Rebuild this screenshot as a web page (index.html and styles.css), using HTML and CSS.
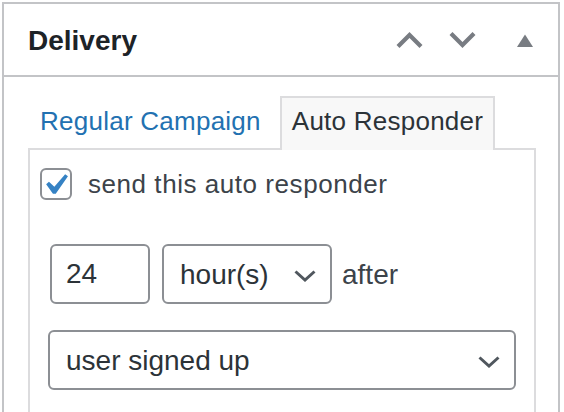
FILE: index.html
```html
<!DOCTYPE html>
<html lang="en">
<head>
<meta charset="utf-8">
<title>Delivery</title>
<link rel="stylesheet" href="styles.css">
</head>
<body>
<div class="postbox">
  <div class="postbox-header">
    <h2 class="hndle">Delivery</h2>
    <div class="handle-actions">
      <svg class="handle-icon chevron" viewBox="0 0 27 16" width="27" height="16" aria-hidden="true"><polyline points="2,14.5 13.5,3 25,14.5"/></svg>
      <svg class="handle-icon chevron chevron-down" viewBox="0 0 27 16" width="27" height="16" aria-hidden="true"><polyline points="2,1.5 13.5,13 25,1.5"/></svg>
      <svg class="handle-icon toggle" viewBox="0 0 16 13" width="16" height="13" aria-hidden="true"><polygon points="0,13 8,0.5 16,13"/></svg>
    </div>
  </div>
  <div class="inside">
    <ul class="tabs">
      <li class="tab"><a class="tab-link" href="#">Regular Campaign</a></li>
      <li class="tab tab-active">Auto Responder</li>
    </ul>
    <div class="tab-panel">
      <label class="check-row">
        <span class="checkbox"><svg class="checkmark" viewBox="0 0 20 20" width="42" height="42" aria-hidden="true"><path d="M14.83 4.89l1.34.94-5.81 8.38H9.02L5.78 9.67l1.34-1.25 2.57 2.4z"/></svg></span>
        <span class="check-label">send this auto responder</span>
      </label>
      <div class="settings">
        <div class="row">
          <input class="field num" type="text" value="24">
          <span class="select-wrap">
            <select class="field select select-unit"><option>hour(s)</option></select>
            <svg class="chev" viewBox="0 0 22 12" width="22" height="12" aria-hidden="true"><polyline points="1.5,1.5 11,10 20.5,1.5"/></svg>
          </span>
          <span class="after">after</span>
        </div>
        <div class="row row-event">
          <span class="select-wrap select-wrap-full">
            <select class="field select select-full"><option>user signed up</option></select>
            <svg class="chev" viewBox="0 0 22 12" width="22" height="12" aria-hidden="true"><polyline points="1.5,1.5 11,10 20.5,1.5"/></svg>
          </span>
        </div>
      </div>
    </div>
  </div>
</div>
</body>
</html>
```
FILE: styles.css
```css
html, body {
  height: 100%;
}
body {
  margin: 0;
  background: #ffffff;
  overflow: hidden;
  font-family: "Liberation Sans", Arial, sans-serif;
  color: #3c434a;
}
.postbox {
  box-sizing: border-box;
  display: flex;
  flex-direction: column;
  width: 558px;
  height: 410px;
  margin: 2px 0 0 2px;
  border: 2px solid #c3c4c7;
  border-bottom: 0;
  background: #ffffff;
  overflow: hidden;
}
.postbox-header {
  display: flex;
  align-items: center;
  justify-content: space-between;
  border-bottom: 2px solid #c3c4c7;
}
.hndle {
  margin: 0;
  padding: 17px 24px 15px;
  font-size: 28px;
  line-height: 39px;
  font-weight: 700;
  color: #1d2327;
}
.handle-actions {
  display: flex;
  align-items: center;
  padding-right: 25px;
}
.handle-icon {
  display: block;
}
.chevron polyline {
  fill: none;
  stroke: #787c82;
  stroke-width: 4.2;
  stroke-linecap: butt;
  stroke-linejoin: miter;
}
.chevron-down {
  margin-left: 26px;
}
.toggle {
  margin-left: 41px;
  margin-top: 1px;
}
.toggle polygon {
  fill: #787c82;
}
.inside {
  flex: 1;
  display: flex;
  flex-direction: column;
  padding: 19px 22px 0 24px;
}
.tabs {
  list-style: none;
  margin: 0;
  padding: 0;
  display: flex;
  gap: 7px;
}
.tab {
  position: relative;
  z-index: 1;
  margin-bottom: -2px;
  padding: 6px 10px 11px;
  border: 2px solid transparent;
  border-bottom: 0;
  font-size: 26px;
  line-height: 35px;
  letter-spacing: 0.25px;
}
.tab-link {
  color: #2271b1;
  text-decoration: none;
}
.tab-active {
  background: #f8f8f8;
  border-color: #dcdcde;
  color: #2c3338;
}
.tab-panel {
  flex: 1;
  padding: 18px 10px;
  border: 2px solid #dcdcde;
  border-bottom: 0;
  background: #ffffff;
}
.check-row {
  display: flex;
  align-items: center;
  gap: 16px;
  height: 32px;
}
.checkbox {
  position: relative;
  box-sizing: border-box;
  width: 32px;
  height: 32px;
  flex: none;
  border: 2px solid #8c8f94;
  border-radius: 6px;
  background: #ffffff;
}
.checkmark {
  position: absolute;
  left: -8px;
  top: -6px;
}
.checkmark path {
  fill: #3582c4;
}
.check-label {
  font-size: 26px;
  letter-spacing: 0.55px;
  color: #3c434a;
}
.settings {
  margin: 44px 8px 0;
}
.row {
  display: flex;
  align-items: center;
  gap: 8px;
}
.row-event {
  margin-top: 26px;
}
.field {
  box-sizing: border-box;
  height: 60px;
  margin: 0;
  border: 2px solid #8c8f94;
  border-radius: 6px;
  background: #ffffff;
  font-family: "Liberation Sans", Arial, sans-serif;
  font-size: 28px;
  color: #2c3338;
  outline: none;
}
.num {
  width: 100px;
  margin: 0 2px;
  padding: 0 14px;
}
.select-wrap {
  position: relative;
  display: block;
  margin: 0 2px;
}
.select-wrap-full {
  width: 100%;
  margin: 0;
}
.select {
  -webkit-appearance: none;
  appearance: none;
  padding: 0 48px 0 16px;
}
.select-unit {
  width: 170px;
}
.select-full {
  width: 100%;
}
.chev {
  position: absolute;
  right: 16px;
  top: calc(50% - 4px);
  pointer-events: none;
}
.chev polyline {
  fill: none;
  stroke: #50575e;
  stroke-width: 3;
}
.after {
  font-size: 28px;
  color: #3c434a;
  margin-top: 2px;
}
```
